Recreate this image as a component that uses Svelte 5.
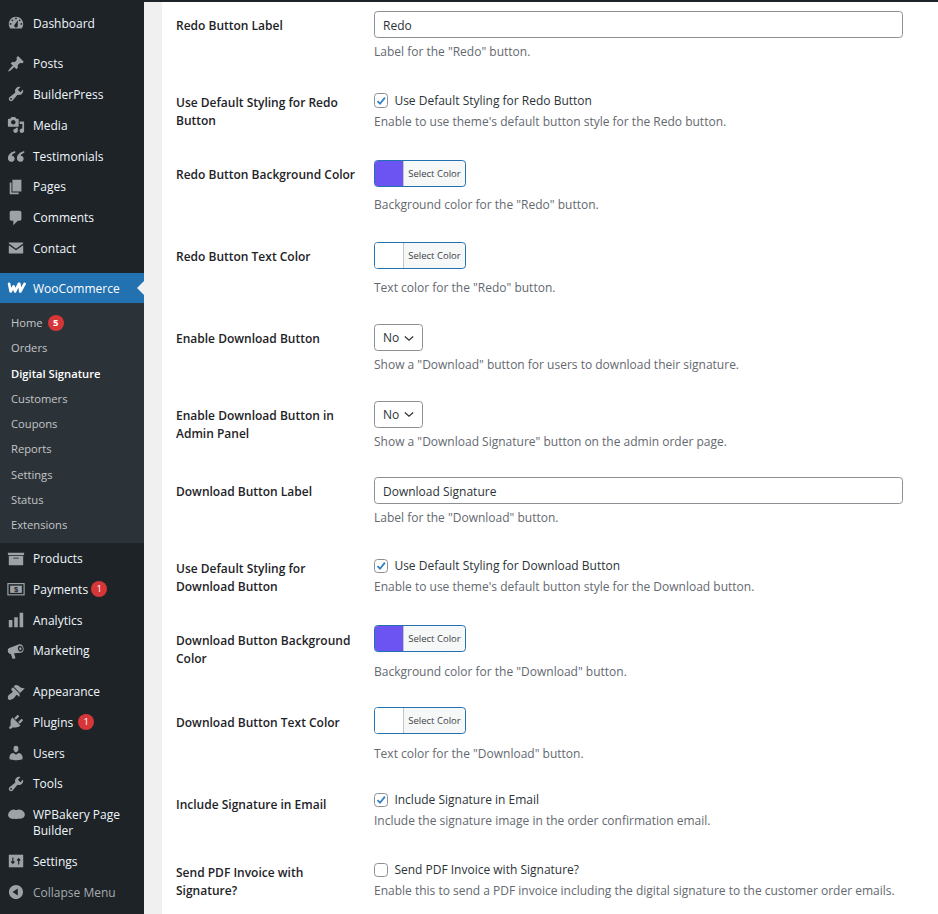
<script>
  const top = [
    { name: "Dashboard", d: "M3.76 16h12.48c1.1-1.37 1.76-3.11 1.76-5 0-4.42-3.58-8-8-8s-8 3.58-8 8c0 1.89.66 3.63 1.76 5zM10 4c.55 0 1 .45 1 1s-.45 1-1 1-1-.45-1-1 .45-1 1-1zM6 6c.55 0 1 .45 1 1s-.45 1-1 1-1-.45-1-1 .45-1 1-1zm8 0c.55 0 1 .45 1 1s-.45 1-1 1-1-.45-1-1 .45-1 1-1zm-5.37 5.55L12 7v6c0 1.1-.9 2-2 2s-2-.9-2-2c0-.57.24-1.08.63-1.45zM4 10c.55 0 1 .45 1 1s-.45 1-1 1-1-.45-1-1 .45-1 1-1zm12 0c.55 0 1 .45 1 1s-.45 1-1 1-1-.45-1-1 .45-1 1-1z" },
  ];
  const content = [
    { name: "Posts", d: "M10.44 3.02l1.82-1.82 6.36 6.35-1.83 1.82c-1.05-.68-2.48-.57-3.41.36l-.75.75c-.92.93-1.04 2.35-.35 3.41l-1.83 1.82-2.41-2.41-2.8 2.79c-.42.42-3.38 2.71-3.8 2.29s1.86-3.39 2.28-3.81l2.79-2.79L4.1 9.36l1.83-1.82c1.05.69 2.48.57 3.4-.36l.75-.75c.93-.92 1.05-2.35.36-3.41z" },
    { name: "BuilderPress", d: wrench() },
    { name: "Media", d: "M13 11V4c0-.55-.45-1-1-1h-1.67L9 1H5L3.67 3H2c-.55 0-1 .45-1 1v7c0 .55.45 1 1 1h10c.55 0 1-.45 1-1zM7 4.5c1.38 0 2.5 1.12 2.5 2.5S8.38 9.5 7 9.5 4.5 8.38 4.5 7 5.62 4.5 7 4.5zM14 6h5v10.5c0 1.38-1.12 2.5-2.5 2.5S14 17.88 14 16.5s1.12-2.5 2.5-2.5c.17 0 .34.02.5.05V9h-3V6zm-4 8.05V13h2v3.5c0 1.38-1.12 2.5-2.5 2.5S7 17.88 7 16.5 8.12 14 9.5 14c.17 0 .34.02.5.05z" },
    { name: "Testimonials", d: "M9 4.5C5.2 5.4 1 8.2 1 12.6 1 15 2.7 16.5 4.8 16.5c2 0 3.7-1.5 3.7-3.5S7 9.8 5.2 9.7C5.6 8.3 7.2 7 9.3 6.4zM19 4.5c-3.8.9-8 3.7-8 8.1 0 2.4 1.7 3.9 3.8 3.9 2 0 3.7-1.5 3.7-3.5s-1.5-3.2-3.3-3.3c.4-1.4 2-2.7 4.1-3.3z" },
    { name: "Pages", d: "M6 15V2h10v13H6zm-1 1h8v2H3V5h2v11z" },
    { name: "Comments", d: "M5 2h9c1.1 0 2 .9 2 2v7c0 1.1-.9 2-2 2h-2l-5 5v-5H5c-1.1 0-2-.9-2-2V4c0-1.1.9-2 2-2z" },
    { name: "Contact", d: "M2 4.5C2 4.2 2.2 4 2.5 4h15c.3 0 .5.2.5.5v.6l-8 5.6-8-5.6zM2 7l8 5.6L18 7v8.5c0 .3-.2.5-.5.5h-15c-.3 0-.5-.2-.5-.5z" },
  ];
  const subs = ["Home", "Orders", "Digital Signature", "Customers", "Coupons", "Reports", "Settings", "Status", "Extensions"];
  const wooItems = [
    { name: "Products", d: "M19 3v2.5H1V3h18zM2 6.5h16V17H2V6.5zm11 3V8.500H7v1h6z" },
    { name: "Payments", icon: "payments", badge: 1, tight: true },
    { name: "Analytics", d: "M18 18V2h-4v16h4zm-6 0V7H8v11h4zm-6 0v-8H2v8h4z" },
    { name: "Marketing", d: "M13.5 2.5c2.6-.7 4.7 2 5 4.8.2 2.3-.8 4.2-2.7 4.7L7.8 12.6l1.7 5.4-3.2.8-2-5.4c-1.6.2-2.9-1-3.3-2.8-.4-1.7.2-3.2 1.5-3.8zM14 4.200c-1.500.4-2.200 2-1.800 3.800.5 1.800 2 3 3.500 2.600s2.200-2.100 1.800-3.800C17 5 15.500 3.800 14 4.200zm.4 1.800c.8-.2 1.400.4 1.600 1.200.2.800-.1 1.500-.8 1.700-.7.200-1.400-.4-1.600-1.200-.2-.8.1-1.500.8-1.700z" },
  ];
  const lower = [
    { name: "Appearance", d: "M14.48 11.06L7.41 3.99l1.5-1.5c.5-.56 2.3-.47 3.51.32 1.21.8 1.43 1.28 2.91 2.1 1.18.64 2.45 1.26 4.45.85zm-.71.71L6.7 4.7 4.93 6.47c-.39.39-.39 1.02 0 1.41l1.06 1.06c.39.39.39 1.03 0 1.42-.6.6-1.43 1.11-2.21 1.69-.35.26-.7.53-1.01.84C1.43 13.23.11 16.69 1.61 18.3c1.23 1.23 4.59-.11 6.13-1.57.3-.3.53-.67.78-1.01.58-.78 1.03-1.36 1.71-2.04.39-.39 1.02-.39 1.41 0l1.07 1.06c.39.39 1.02.39 1.41 0z" },
    { name: "Plugins", d: "M13.11 4.36L9.87 7.6 8 5.73l3.24-3.24c.35-.34 1.05-.2 1.56.32.52.51.66 1.21.31 1.55zm-8 1.77l.91-1.12 9.01 9.01-1.19.84c-.71.71-2.63 1.16-3.82 1.16H6.14L4.9 17.26c-.59.59-1.54.59-2.12 0-.59-.58-.59-1.53 0-2.12l1.24-1.24v-3.88c0-1.13.4-3.19 1.09-3.89zm7.26 3.97l3.24-3.24c.34-.35 1.04-.21 1.55.31.52.51.66 1.21.31 1.55l-3.24 3.25z", badge: 1 },
    { name: "Users", d: "M10 9.25c-2.27 0-2.73-3.44-2.73-3.44C7 4.02 7.82 2 9.97 2c2.16 0 2.98 2.02 2.71 3.81 0 0-.41 3.44-2.68 3.44zm0 2.57L12.72 10c2.39 0 4.52 2.33 4.52 4.53v2.49s-3.65 1.13-7.24 1.13c-3.65 0-7.24-1.13-7.24-1.13v-2.49c0-2.25 1.94-4.48 4.47-4.48z" },
    { name: "Tools", d: wrench() },
    { name: "WPBakery Page Builder", d: "M4.500 4.500c1.500-.9 3.500-.7 5 .1 1.800-1 4.500-1.200 6.500 0 2.200 1.300 3.500 3.500 3.300 5.500-.2 1.800-1.300 3-3 3.600-1.300.5-2.700.4-4 .1-1.500.9-3.400 1-5 .4-1.200.3-2.800.2-4-.6C1.200 12.700.3 11 .7 9.200 1 7.200 2.800 5.500 4.500 4.500z", wide: true },
    { name: "Settings", icon: "sliders" },
  ];

  const rows = [
    { label: "Redo Button Label", type: "input", value: "Redo", desc: 'Label for the "Redo" button.' },
    { label: "Use Default Styling for Redo Button", type: "check", checked: true, text: "Use Default Styling for Redo Button", desc: "Enable to use theme's default button style for the Redo button." },
    { label: "Redo Button Background Color", type: "color", color: "#6c54f2", desc: 'Background color for the "Redo" button.' },
    { label: "Redo Button Text Color", type: "color", color: "#ffffff", desc: 'Text color for the "Redo" button.' },
    { label: "Enable Download Button", type: "select", desc: 'Show a "Download" button for users to download their signature.' },
    { label: "Enable Download Button in Admin Panel", type: "select", desc: 'Show a "Download Signature" button on the admin order page.' },
    { label: "Download Button Label", type: "input", value: "Download Signature", desc: 'Label for the "Download" button.' },
    { label: "Use Default Styling for Download Button", type: "check", checked: true, text: "Use Default Styling for Download Button", desc: "Enable to use theme's default button style for the Download button." },
    { label: "Download Button Background Color", type: "color", color: "#6c54f2", desc: 'Background color for the "Download" button.' },
    { label: "Download Button Text Color", type: "color", color: "#ffffff", desc: 'Text color for the "Download" button.' },
    { label: "Include Signature in Email", type: "check", checked: true, text: "Include Signature in Email", desc: "Include the signature image in the order confirmation email." },
    { label: "Send PDF Invoice with Signature?", type: "check", checked: false, text: "Send PDF Invoice with Signature?", desc: "Enable this to send a PDF invoice including the digital signature to the customer order emails." },
  ];

  function wrench() {
    return "M16.68 9.77c-1.34 1.34-3.3 1.67-4.95.99l-5.41 6.52c-.99.99-2.59.99-3.58 0s-.99-2.59 0-3.57l6.52-5.42c-.68-1.65-.35-3.61.99-4.95 1.28-1.28 3.12-1.62 4.72-1.06l-2.89 2.89 2.82 2.82 2.86-2.87c.53 1.58.18 3.39-1.08 4.65zM3.81 16.21c.4.39 1.04.39 1.43 0 .4-.4.4-1.04 0-1.43-.39-.4-1.03-.4-1.43 0-.39.39-.39 1.03 0 1.43z";
  }
</script>

{#snippet menuItem(item)}
  <li class="item" class:tall={item.wide}>
    <span class="ico">
      {#if item.icon === "payments"}
        <svg viewBox="0 0 20 20" width="18" height="18"><rect x="1" y="4" width="18" height="12.500" fill="none" stroke="currentColor" stroke-width="1.300"/><rect x="3.500" y="6.300" width="13" height="8" fill="currentColor"/><text x="10" y="13.200" text-anchor="middle" font-size="8.500" font-weight="700" fill="#1d2327" font-family="Liberation Sans, sans-serif">$</text></svg>
      {:else if item.icon === "sliders"}
        <svg viewBox="0 0 20 20" width="18" height="18"><rect x="2" y="3" width="16" height="14" fill="currentColor"/><path d="M6.500 6v6M4.700 10.500l1.800 2.200 1.800-2.200M13 14V8M11.200 9.500L13 7.300l1.800 2.200" stroke="#1d2327" stroke-width="1.300" fill="none"/></svg>
      {:else}
        <svg viewBox="0 0 20 20" width={item.wide ? 19 : 18} height="18"><path d={item.d} fill="currentColor"/></svg>
      {/if}
    </span>
    <span class="name">{item.name}</span>
    {#if item.badge}<span class="badge" class:tight={item.tight}>{item.badge}</span>{/if}
  </li>
{/snippet}

<div class="page">
  <div class="bar"></div>
  <div class="body">
    <aside>
      <ul class="menu first">
        {#each top as item}{@render menuItem(item)}{/each}
      </ul>
      <ul class="menu posts">
        {#each content as item}{@render menuItem(item)}{/each}
      </ul>
      <div class="woo">
        <div class="woo-head">
          <span class="ico">
            <svg viewBox="0 0 20 12" width="19" height="12"><path d="M2.200 1.600l1.700 8 3-5.200 1.600 5.200 4-7.900M13 1.700l1 8 4.500-8" fill="none" stroke="#fff" stroke-width="2.800" stroke-linejoin="round" stroke-linecap="round"/></svg>
          </span>
          <span class="name">WooCommerce</span>
          <span class="arrow"></span>
        </div>
        <ul class="sub">
          {#each subs as s, i}
            <li class:current={s === "Digital Signature"}>
              {s}{#if i === 0}<span class="badge small">5</span>{/if}
            </li>
          {/each}
        </ul>
      </div>
      <ul class="menu store">
        {#each wooItems as item}{@render menuItem(item)}{/each}
      </ul>
      <ul class="menu">
        {#each lower as item}{@render menuItem(item)}{/each}
        <li class="item collapse">
          <span class="ico">
            <svg viewBox="0 0 20 20" width="18" height="18"><path d="M10 2.160c4.330 0 7.840 3.510 7.840 7.840s-3.510 7.840-7.840 7.840S2.160 14.330 2.160 10 5.710 2.160 10 2.160zm2 11.720V6.120L6.180 9.970z" fill="currentColor"/></svg>
          </span>
          <span class="name">Collapse Menu</span>
        </li>
      </ul>
    </aside>
    <main>
      <div class="form">
        {#each rows as row}
          <div class="row t-{row.type}">
            <div class="th">{row.label}</div>
            <div class="td">
              {#if row.type === "input"}
                <div class="text-input">{row.value}</div>
              {:else if row.type === "select"}
                <div class="dropdown">
                  No
                  <svg viewBox="0 0 12 8" width="10" height="7"><path d="M1 1.500l5 4.500 5-4.500" fill="none" stroke="#2c3338" stroke-width="1.500"/></svg>
                </div>
              {:else if row.type === "color"}
                <div class="color-btn">
                  <span class="swatch" style="background:{row.color}"></span>
                  <span class="pick">Select Color</span>
                </div>
              {:else}
                <div class="check-line">
                  <span class="box">
                    {#if row.checked}
                      <svg viewBox="0 0 16 16" width="14" height="14"><path d="M3.200 8.200l3.300 3.300 6.300-7.800" fill="none" stroke="#3582c4" stroke-width="2.400"/></svg>
                    {/if}
                  </span>
                  {row.text}
                </div>
              {/if}
              <p class="desc">{row.desc}</p>
            </div>
          </div>
        {/each}
      </div>
    </main>
  </div>
</div>

<style>
  :global(body) {
    margin: 0;
    background: #f0f0f1;
  }
  .page {
    width: 938px;
    height: 914px;
    overflow: hidden;
    display: flex;
    flex-direction: column;
    font-family: "Open Sans", "Noto Sans", sans-serif;
    font-size: 12px;
    line-height: 18px;
    color: #1d2327;
  }
  .bar {
    height: 2px;
    background: #1d2327;
    position: relative;
    z-index: 1;
    flex: none;
  }
  .body {
    flex: 1;
    display: flex;
    min-height: 0;
  }
  aside {
    width: 144px;
    flex: none;
    background: #1d2327;
    color: #f0f6fc;
    padding-top: 6.100px;
  }
  ul {
    list-style: none;
    margin: 0;
    padding: 0;
  }
  .menu {
    margin-bottom: 9.400px;
  }
  .menu.posts {
    margin-bottom: 8.900px;
  }
  .menu.store {
    margin-bottom: 9.800px;
  }
  .item {
    display: flex;
    align-items: center;
    box-sizing: border-box;
    min-height: 30.800px;
  }
  .item.tall {
    padding: 6.800px 0;
    align-items: flex-start;
  }
  .item .name {
    max-width: 100px;
    line-height: 16px;
    padding-top: 1px;
  }
  .ico {
    width: 33px;
    padding-left: 7px;
    box-sizing: border-box;
    display: flex;
    align-items: center;
    flex: none;
    color: #9da2a7;
  }
  .badge {
    width: 16px;
    height: 16px;
    border-radius: 50%;
    background: #d63638;
    color: #fff;
    font-size: 9.500px;
    line-height: 16px;
    text-align: center;
    margin-left: 5px;
  }
  .badge.tight {
    margin-left: 3px;
  }
  .badge.small {
    display: inline-block;
    font-weight: 700;
  }
  .collapse .name {
    color: #a7aaad;
  }
  .woo-head {
    height: 30.500px;
    background: #2271b1;
    display: flex;
    align-items: center;
    position: relative;
    color: #fff;
  }
  .woo-head .name {
    padding-top: 1px;
  }
  .arrow {
    position: absolute;
    right: 0;
    top: 8px;
    border: 7px solid transparent;
    border-right-color: #f0f0f1;
    border-left-width: 0;
  }
  .sub {
    background: #2c3338;
    padding: 7.300px 0 5.400px;
    font-size: 11.200px;
    color: #c3c5c8;
  }
  .sub li {
    height: 25.250px;
    padding-left: 11px;
    display: flex;
    align-items: center;
  }
  .sub .current {
    color: #fff;
    font-weight: 600;
  }
  main {
    flex: 1;
    padding-left: 18px;
    min-width: 0;
    display: flex;
  }
  .form {
    flex: 1;
    display: flow-root;
    background: #fff;
    padding-left: 14px;
  }
  .row {
    display: grid;
    grid-template-columns: 198px 529px;
  }
  .row:first-child {
    margin-top: -3.100px;
    padding-bottom: 0.600px;
  }
  .row:nth-child(3) {
    padding-bottom: 0.500px;
  }
  .row:nth-child(3) .desc {
    position: relative;
    top: -1px;
  }
  .th {
    padding: 18px 0;
    width: 182px;
    font-weight: 600;
  }
  .td {
    padding: 12px 0 14.500px;
    color: #2c3338;
  }
  .t-check .td {
    padding: 13.500px 0;
    align-self: center;
  }
  .t-color .td {
    padding-bottom: 14.900px;
  }
  .text-input,
  .dropdown,
  .color-btn {
    box-sizing: border-box;
    height: 27px;
    border-radius: 3.600px;
  }
  .text-input {
    width: 529px;
    border: 1px solid #8c8f94;
    padding: 0 8px;
    line-height: 27px;
    background: #fff;
  }
  .dropdown {
    width: 49px;
    border: 1px solid #8c8f94;
    padding: 1px 0 0 8px;
    display: flex;
    align-items: center;
    gap: 5px;
  }
  .desc {
    margin: 5px 0 0;
    color: #646970;
  }
  .color-btn {
    width: 92px;
    border: 1px solid #2271b1;
    display: flex;
    overflow: hidden;
    margin-top: -0.500px;
    margin-bottom: 10.500px;
    background: #f6f7f7;
  }
  .t-color .desc {
    margin: 0;
  }
  .swatch {
    width: 28px;
    border-right: 1px solid #c3c4c7;
    flex: none;
  }
  .pick {
    flex: 1;
    text-align: center;
    font-size: 9.500px;
    line-height: 26px;
    color: #3c434a;
  }
  .check-line {
    display: flex;
    align-items: center;
    gap: 6px;
    margin-bottom: 3px;
  }
  .t-check .desc {
    margin: 0 0 2px;
  }
  .box {
    box-sizing: border-box;
    width: 14.400px;
    height: 14.400px;
    border: 1px solid #8c8f94;
    border-radius: 3.600px;
    background: #fff;
    display: flex;
    align-items: center;
    justify-content: center;
    flex: none;
  }
</style>
